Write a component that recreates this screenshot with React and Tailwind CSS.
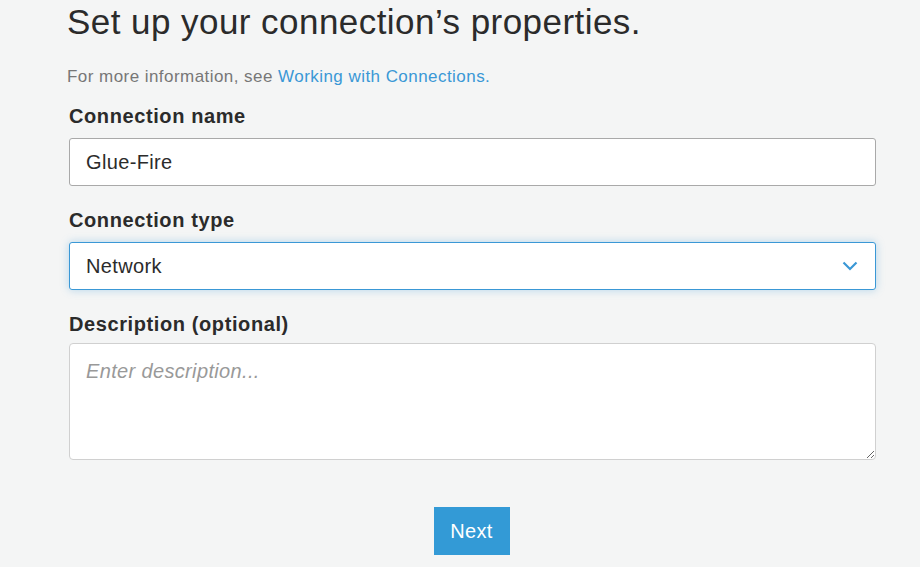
const Field = ({ label, children, className = "", gap = "mb-[11px]" }) => (
  <div className={className}>
    <div className={`text-[20px] font-bold tracking-[0.6px] text-[#2b2b2b] leading-[22px] ${gap}`}>{label}</div>
    {children}
  </div>
);

const App = () => {
  return (
    <div
      className="w-[920px] h-[567px] overflow-hidden bg-[#f4f5f5] text-[#333]"
      style={{ fontFamily: '"Liberation Sans", Arial, sans-serif' }}
    >
      <div className="ml-[69px] w-[807px] pt-[2px]">
        <h1 className="text-[35px] leading-[40px] tracking-[0.45px] text-[#2b2b2b] font-normal -ml-[2px]">
          Set up your connection’s properties.
        </h1>
        <p className="mt-[25px] text-[17px] leading-[20px] tracking-[0.45px] text-[#777] -ml-[2px]">
          For more information, see{" "}
          <a className="text-[#3a98d6]">Working with Connections.</a>
        </p>
        <Field label="Connection name" className="mt-[18px]">
          <div className="h-[48px] bg-white border border-[#a9a9a9] rounded-[3px] flex items-center px-[16px] text-[20px] tracking-[0.35px] text-[#2b2b2b]">
            Glue-Fire
          </div>
        </Field>
        <Field label="Connection type" className="mt-[23px]">
          <div className="h-[48px] bg-white border border-[#3a98d6] rounded-[3px] shadow-[0_0_8px_rgba(58,152,214,0.35)] flex items-center justify-between px-[16px] text-[20px] tracking-[0.35px] text-[#2b2b2b]">
            <span>Network</span>
            <svg width="16" height="10" viewBox="0 0 16 10" className="mr-[1px]">
              <path d="M1.5 1.5 L8 8 L14.5 1.5" fill="none" stroke="#3a98d6" strokeWidth="2.2" />
            </svg>
          </div>
        </Field>
        <Field label="Description (optional)" className="mt-[23px]" gap="mb-[8px]">
          <textarea
            placeholder="Enter description..."
            className="block w-full h-[117px] bg-white border border-[#d0d0d0] rounded-[4px] px-[16px] pt-[12px] pb-[14px] text-[20px] tracking-[0.35px] italic placeholder:text-[#999] outline-none"
          />
        </Field>
        <div className="flex justify-center mt-[47px] pr-[2px]">
          <button className="w-[76px] h-[48px] bg-[#339ad6] text-white text-[20px] tracking-[0.3px]">Next</button>
        </div>
      </div>
    </div>
  );
};

export default App;
